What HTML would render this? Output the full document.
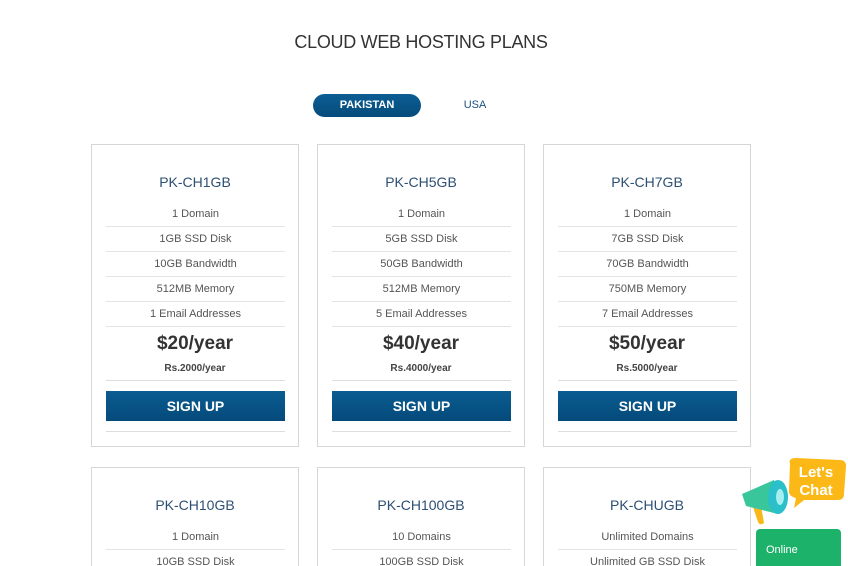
<!DOCTYPE html>
<html style="width:848px;height:566px;overflow:hidden"><head><meta charset="utf-8"><style>
*{margin:0;padding:0;box-sizing:border-box}
body{width:848px;height:566px;overflow:hidden;background:#fff;font-family:"Liberation Sans",sans-serif;position:relative;color:#444}
h1{position:absolute;top:32px;left:0;width:842px;text-align:center;font-size:18px;font-weight:normal;color:#333;letter-spacing:-0.3px}
.tab{position:absolute;top:94px;height:23px;line-height:23px;font-size:11px;font-weight:bold;text-align:center}
.card{position:absolute;width:208px;height:303px;border:1px solid #d6d6d6;background:#fff}
.t{position:absolute;left:0;width:100%;text-align:center;font-size:14px;color:#2d4f73;top:29px}
.r{position:absolute;left:14px;width:179px;text-align:center;font-size:11px;color:#555;height:25px;line-height:25px;border-bottom:1px solid #e4e4e4}
.p{position:absolute;left:0;width:100%;text-align:center;font-size:19px;font-weight:bold;color:#333;top:188px}
.rs{position:absolute;left:0;width:100%;text-align:center;font-size:10px;font-weight:bold;color:#444;top:218px}
.l{position:absolute;left:14px;width:179px;border-top:1px solid #ddd}
.b{position:absolute;left:14px;width:179px;top:246px;height:30px;line-height:30px;text-align:center;color:#fff;font-weight:bold;font-size:14px;background:linear-gradient(#0a5c91,#054a7b)}
</style></head><body>
<h1>CLOUD WEB HOSTING PLANS</h1>
<div class="tab" style="left:313px;width:108px;border-radius:12px;background:linear-gradient(#0b5d93,#064b7c);color:#fff">PAKISTAN</div>
<div class="tab" style="left:450px;width:50px;color:#1d4f7c;font-weight:normal">USA</div>

<div class="card" style="left:91px;top:144px">
<div class="t">PK-CH1GB</div>
<div class="r" style="top:57px">1 Domain</div><div class="r" style="top:82px">1GB SSD Disk</div><div class="r" style="top:107px">10GB Bandwidth</div><div class="r" style="top:132px">512MB Memory</div><div class="r" style="top:157px">1 Email Addresses</div>
<div class="p">$20/year</div><div class="rs">Rs.2000/year</div><div class="l" style="top:235px"></div>
<div class="b">SIGN UP</div><div class="l" style="top:286px"></div></div>

<div class="card" style="left:317px;top:144px">
<div class="t">PK-CH5GB</div>
<div class="r" style="top:57px">1 Domain</div><div class="r" style="top:82px">5GB SSD Disk</div><div class="r" style="top:107px">50GB Bandwidth</div><div class="r" style="top:132px">512MB Memory</div><div class="r" style="top:157px">5 Email Addresses</div>
<div class="p">$40/year</div><div class="rs">Rs.4000/year</div><div class="l" style="top:235px"></div>
<div class="b">SIGN UP</div><div class="l" style="top:286px"></div></div>

<div class="card" style="left:543px;top:144px">
<div class="t">PK-CH7GB</div>
<div class="r" style="top:57px">1 Domain</div><div class="r" style="top:82px">7GB SSD Disk</div><div class="r" style="top:107px">70GB Bandwidth</div><div class="r" style="top:132px">750MB Memory</div><div class="r" style="top:157px">7 Email Addresses</div>
<div class="p">$50/year</div><div class="rs">Rs.5000/year</div><div class="l" style="top:235px"></div>
<div class="b">SIGN UP</div><div class="l" style="top:286px"></div></div>

<div class="card" style="left:91px;top:467px">
<div class="t">PK-CH10GB</div>
<div class="r" style="top:57px">1 Domain</div><div class="r" style="top:82px">10GB SSD Disk</div></div>
<div class="card" style="left:317px;top:467px">
<div class="t">PK-CH100GB</div>
<div class="r" style="top:57px">10 Domains</div><div class="r" style="top:82px">100GB SSD Disk</div></div>
<div class="card" style="left:543px;top:467px">
<div class="t">PK-CHUGB</div>
<div class="r" style="top:57px">Unlimited Domains</div><div class="r" style="top:82px">Unlimited GB SSD Disk</div></div>

<svg style="position:absolute;left:738px;top:456px" width="110" height="75" viewBox="0 0 110 75">
<path d="M52 8 Q50 2 58 2 L102 4 Q108 4 108 10 L106 38 Q106 44 100 44 L66 44 L56 52 L58 42 Q50 40 51 34Z" fill="#fbb817"/>
<text x="78" y="21" font-family="Liberation Sans,sans-serif" font-size="15" font-weight="bold" fill="#fff" text-anchor="middle">Let's</text>
<text x="78" y="39" font-family="Liberation Sans,sans-serif" font-size="15" font-weight="bold" fill="#fff" text-anchor="middle">Chat</text>
<path d="M14 48 L20 66 Q22 70 26 67 L23 50Z" fill="#f8b81a"/>
<path d="M4 38 L36 24 L40 58 L8 50Z" fill="#39c69a"/>
<ellipse cx="40" cy="41" rx="10" ry="17" fill="#2bbfca"/>
<ellipse cx="42" cy="41" rx="4" ry="8" fill="#a7eef0"/>
</svg>
<div style="position:absolute;left:756px;top:529px;width:85px;height:37px;background:#1db26a;border-radius:4px 4px 0 0;color:#fff;font-size:11px;padding:15px 0 0 10px">Online</div>
</body></html>
